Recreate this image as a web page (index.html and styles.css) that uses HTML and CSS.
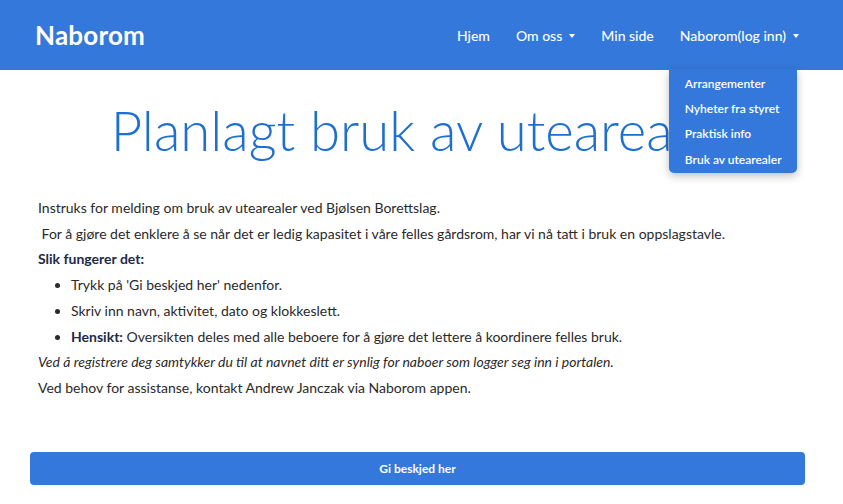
FILE: index.html
```html
<!DOCTYPE html>
<html lang="no">
<head>
<meta charset="utf-8">
<title>Naborom</title>
<link rel="stylesheet" href="styles.css">
</head>
<body>
<header class="topbar">
  <div class="brand">Naborom</div>
  <nav class="nav">
    <a class="nav-link">Hjem</a>
    <a class="nav-link">Om oss <span class="caret"></span></a>
    <a class="nav-link">Min side</a>
    <div class="nav-drop">
      <a class="nav-link">Naborom(log inn) <span class="caret"></span></a>
      <ul class="menu">
        <li>Arrangementer</li>
        <li>Nyheter fra styret</li>
        <li>Praktisk info</li>
        <li>Bruk av utearealer</li>
      </ul>
    </div>
  </nav>
</header>
<main class="content">
  <h1 class="title">Planlagt bruk av utearealer</h1>
  <p>Instruks for melding om bruk av utearealer ved Bjølsen Borettslag.</p>
  <p>&nbsp;For å gjøre det enklere å se når det er ledig kapasitet i våre felles gårdsrom, har vi nå tatt i bruk en oppslagstavle.</p>
  <p><strong>Slik fungerer det:</strong></p>
  <ul class="steps">
    <li>Trykk på 'Gi beskjed her' nedenfor.</li>
    <li>Skriv inn navn, aktivitet, dato og klokkeslett.</li>
    <li><strong>Hensikt:</strong> Oversikten deles med alle beboere for å gjøre det lettere å koordinere felles bruk.</li>
  </ul>
  <p><em>Ved å registrere deg samtykker du til at navnet ditt er synlig for naboer som logger seg inn i portalen.</em></p>
  <p>Ved behov for assistanse, kontakt Andrew Janczak via Naborom appen.</p>
  <button class="cta">Gi beskjed her</button>
</main>
</body>
</html>
```
FILE: styles.css
```css
* { box-sizing: border-box; }
html, body { margin: 0; padding: 0; }
body {
  font-family: "Lato", "Noto Sans", sans-serif;
  background: #ffffff;
  color: #2a2a2a;
  width: 843px;
  overflow: hidden;
}
.topbar {
  height: 70px;
  background: #3578db;
  display: flex;
  align-items: center;
  justify-content: space-between;
  padding: 0 44px 0 35px;
  color: #fff;
}
.brand {
  font-size: 26px;
  font-weight: 700;
  letter-spacing: 0.2px;
}
.nav {
  display: flex;
  align-items: center;
  gap: 26px;
}
.nav-link {
  font-size: 14px;
  font-weight: 500;
  color: #fff;
  display: flex;
  align-items: center;
  gap: 7px;
  cursor: pointer;
}
.caret {
  width: 0;
  height: 0;
  border-left: 3.5px solid transparent;
  border-right: 3.5px solid transparent;
  border-top: 4px solid #fff;
  margin-top: 2px;
}
.nav-drop { position: relative; }
.menu {
  position: absolute;
  top: 42px;
  left: -11px;
  width: 128px;
  margin: 0;
  padding: 2px 0 1px;
  list-style: none;
  background: #3578db;
  border-radius: 0 0 5px 5px;
  box-shadow: 0 3px 8px rgba(0, 0, 0, 0.25);
}
.menu li {
  font-size: 12px;
  font-weight: 600;
  line-height: 25.4px;
  padding-left: 16px;
  color: #fff;
}
.content {
  padding: 0 38px 0 38px;
}
.title {
  margin: 30px 0 35px;
  text-align: center;
  font-size: 54.5px;
  line-height: 60px;
  font-weight: 300;
  color: #1e6fd0;
  white-space: nowrap;
}
.content p {
  margin: 0;
  font-size: 14px;
  line-height: 25.7px;
}
.content strong { color: #1c2a48; font-weight: 700; }
.steps {
  margin: 0;
  padding-left: 33px;
}
.steps li {
  font-size: 14px;
  line-height: 25.7px;
}
.cta {
  display: block;
  width: 775px;
  height: 33px;
  margin: 51px 0 0 -8px;
  border: none;
  border-radius: 4px;
  background: #3578db;
  color: #fff;
  font-family: "Lato", sans-serif;
  font-size: 12px;
  font-weight: 700;
}
```
